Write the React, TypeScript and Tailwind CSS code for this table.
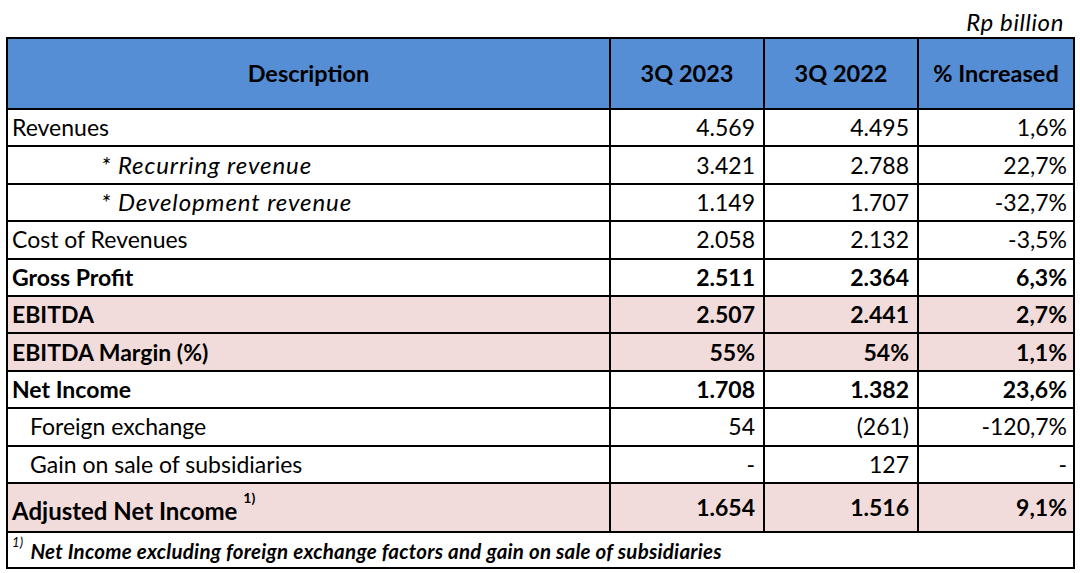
import React from 'react';

type Row = {
    label: React.ReactNode;
    a: string;
    b: string;
    c: string;
    bold?: boolean;
    pink?: boolean;
    indent?: 'star' | 'sub';
};

const rows: Row[] = [
    { label: 'Revenues', a: '4.569', b: '4.495', c: '1,6%' },
    { label: '* Recurring revenue', a: '3.421', b: '2.788', c: '22,7%', indent: 'star' },
    { label: '* Development revenue', a: '1.149', b: '1.707', c: '-32,7%', indent: 'star' },
    { label: 'Cost of Revenues', a: '2.058', b: '2.132', c: '-3,5%' },
    { label: 'Gross Profit', a: '2.511', b: '2.364', c: '6,3%', bold: true },
    { label: 'EBITDA', a: '2.507', b: '2.441', c: '2,7%', bold: true, pink: true },
    { label: 'EBITDA Margin (%)', a: '55%', b: '54%', c: '1,1%', bold: true, pink: true },
    { label: 'Net Income', a: '1.708', b: '1.382', c: '23,6%', bold: true },
    { label: 'Foreign exchange', a: '54', b: '(261)', c: '-120,7%', indent: 'sub' },
    { label: 'Gain on sale of subsidiaries', a: '-', b: '127', c: '-', indent: 'sub' },
];

const cell = 'border-2 border-black';

export default function App() {
    return (
        <div className="w-[1080px] h-[573px] bg-white text-black font-['Lato',sans-serif] pl-[6px] pt-[6px]">
            <div className="w-[1067px] text-right pr-[9px] text-[24px] tracking-[0.6px] italic leading-[31px]">Rp billion</div>

            <table className="table-fixed border-collapse w-[1067px] text-[23px] leading-none">
                <colgroup>
                    <col className="w-[603px]" />
                    <col className="w-[154px]" />
                    <col className="w-[154px]" />
                    <col className="w-[156px]" />
                </colgroup>
                <thead>
                    <tr className="h-[71px] bg-[#558ed5] font-bold text-[23.5px]">
                        <th className={cell + ' text-center'}>Description</th>
                        <th className={cell + ' text-center'}>3Q 2023</th>
                        <th className={cell + ' text-center'}>3Q 2022</th>
                        <th className={cell + ' text-center'}>% Increased</th>
                    </tr>
                </thead>
                <tbody>
                    {rows.map((r, i) => (
                        <tr
                            key={i}
                            className={
                                'h-[37.4px] ' +
                                (r.pink ? 'bg-[#f2dcdb] ' : '') +
                                (r.bold ? 'font-bold' : '')
                            }
                        >
                            <td
                                className={
                                    cell +
                                    (r.indent === 'star'
                                        ? ' pl-[93px] italic text-[24px] tracking-[0.9px]'
                                        : r.indent === 'sub'
                                        ? ' pl-[22px]'
                                        : ' pl-[4px]')
                                }
                            >
                                {r.label}
                            </td>
                            <td className={cell + ' text-right pr-[8px]'}>{r.a}</td>
                            <td className={cell + ' text-right pr-[8px]'}>{r.b}</td>
                            <td className={cell + ' text-right pr-[6px]'}>{r.c}</td>
                        </tr>
                    ))}
                    <tr className="h-[49px] bg-[#f2dcdb] font-bold">
                        <td className={cell + ' pl-[4px] pt-[8px] text-[24px]'}>
                            Adjusted Net Income{' '}
                            <sup className="text-[14px] align-[10px]">1)</sup>
                        </td>
                        <td className={cell + ' text-right pr-[8px]'}>1.654</td>
                        <td className={cell + ' text-right pr-[8px]'}>1.516</td>
                        <td className={cell + ' text-right pr-[6px]'}>9,1%</td>
                    </tr>
                    <tr className="h-[36px]">
                        <td colSpan={4} className={cell + ' pl-[4px] pt-[3px] text-[20.5px] tracking-[0.25px] italic font-bold'}>
                            <sup className="text-[13px] font-normal align-[6px] mr-[7px]">1)</sup>
                            Net Income excluding foreign exchange factors and gain on sale of subsidiaries
                        </td>
                    </tr>
                </tbody>
            </table>
        </div>
    );
}
